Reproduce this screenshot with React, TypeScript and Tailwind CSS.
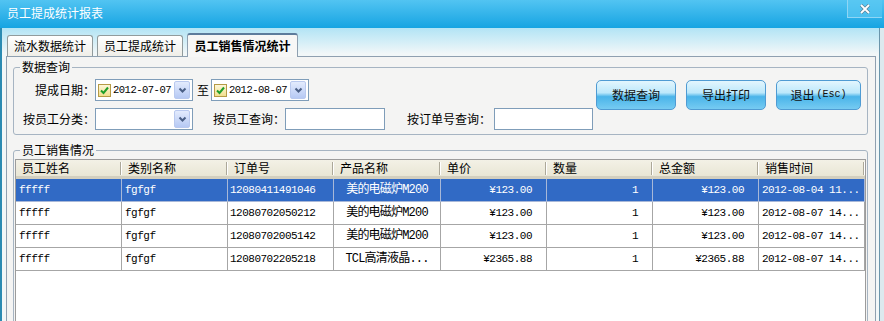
import React from "react";

const SANS = "font-['Noto_Sans_CJK_SC',sans-serif]";
const MONO = "font-['Liberation_Mono','Noto_Sans_CJK_SC',monospace]";
const GRID = "grid grid-cols-[106px_106px_106px_107px_106px_106px_106px_106px]";

type Row = {
  name: string;
  cat: string;
  no: string;
  product: string;
  price: string;
  qty: string;
  total: string;
  time: string;
};

const ROWS: Row[] = [
  { name: "fffff", cat: "fgfgf", no: "12080411491046", product: "美的电磁炉M200", price: "¥123.00", qty: "1", total: "¥123.00", time: "2012-08-04 11..." },
  { name: "fffff", cat: "fgfgf", no: "12080702050212", product: "美的电磁炉M200", price: "¥123.00", qty: "1", total: "¥123.00", time: "2012-08-07 14..." },
  { name: "fffff", cat: "fgfgf", no: "12080702005142", product: "美的电磁炉M200", price: "¥123.00", qty: "1", total: "¥123.00", time: "2012-08-07 14..." },
  { name: "fffff", cat: "fgfgf", no: "12080702205218", product: "TCL高清液晶...", price: "¥2365.88", qty: "1", total: "¥2365.88", time: "2012-08-07 14..." },
];

const HEADERS = ["员工姓名", "类别名称", "订单号", "产品名称", "单价", "数量", "总金额", "销售时间"];

function Chevron() {
  return (
    <svg width="9" height="7" viewBox="0 0 9 7">
      <path d="M1.5 1.5 L4.5 4.5 L7.5 1.5" fill="none" stroke="#4a5f86" strokeWidth="2" />
    </svg>
  );
}

function DropButton() {
  return (
    <div className="ml-auto flex h-[18px] w-[16px] shrink-0 items-center justify-center rounded-[2px] border border-[#b9c9ef] bg-[linear-gradient(to_bottom,#e3ebfd,#b6c9f4)]">
      <Chevron />
    </div>
  );
}

function DatePicker({ value }: { value: string }) {
  return (
    <div className="flex h-[22px] w-[98px] shrink-0 items-center border border-[#7f9db9] bg-white pl-[2px] pr-[2px]">
      <div className="flex h-[13px] w-[13px] shrink-0 items-center justify-center border border-[#b59a45] bg-[linear-gradient(to_bottom,#fdf6d8,#f1df8e)]">
        <svg width="11" height="11" viewBox="0 0 11 11">
          <path d="M2 5.5 L4.5 8 L9 2.5" fill="none" stroke="#1f9f2a" strokeWidth="2" />
        </svg>
      </div>
      <span className={`${MONO} ml-[2px] whitespace-nowrap text-[10.5px] leading-[14px] tracking-[-0.5px] text-black`}>{value}</span>
      <DropButton />
    </div>
  );
}

function TextBox({ w }: { w: string }) {
  return <div className={`h-[22px] ${w} shrink-0 border border-[#7f9db9] bg-white`} />;
}

function GlossButton({ children, w }: { children: React.ReactNode; w: string }) {
  return (
    <button
      className={`flex h-[30px] ${w} items-center justify-center rounded-[5px] border border-[#4f9bd3] bg-[linear-gradient(to_bottom,#e3f6fe_0%,#bce8fb_42%,#4ab4e9_56%,#76cbf2_100%)] text-[12px] leading-none text-[#111]`}
    >
      {children}
    </button>
  );
}

function Tab({ label, active }: { label: string; active?: boolean }) {
  if (active) {
    return (
      <div className="relative z-10 -mb-px flex h-[24px] w-[111px] items-center justify-center rounded-t-[3px] border border-b-0 border-[#8fa0b0] border-t-2 border-t-[#5d7c9c] bg-[#f7f7f6] text-[12px] font-bold leading-none text-black">
        {label}
      </div>
    );
  }
  return (
    <div className="flex h-[21px] w-[86px] items-center justify-center rounded-t-[3px] border border-b-0 border-[#919b9c] bg-[linear-gradient(to_bottom,#ffffff,#efeee8)] text-[12px] leading-none text-black">
      {label}
    </div>
  );
}

export default function App() {
  return (
    <div className={`${SANS} flex h-[321px] w-[884px] flex-col overflow-hidden bg-white`}>
      {/* Title bar */}
      <div className="flex h-[28px] shrink-0 items-start justify-between bg-[linear-gradient(to_bottom,#52c4f2,#16a4e2)]">
        <span className="pl-[7px] pt-[6px] text-[12px] leading-[14px] text-white">员工提成统计报表</span>
        <div className="mr-[2px] flex h-[18px] w-[35px] items-center justify-center border-b border-l border-[#8fd6f5] bg-[#5ec9f3]/60">
          <svg width="12" height="10" viewBox="0 0 12 10">
            <path d="M2 1 L10 9 M10 1 L2 9" stroke="#5b7d92" strokeWidth="3.2" />
            <path d="M2 1 L10 9 M10 1 L2 9" stroke="#ffffff" strokeWidth="1.8" />
          </svg>
        </div>
      </div>

      {/* Body */}
      <div className="flex flex-1 flex-col border-l-2 border-r-4 border-l-[#2b8bb2] border-r-[#dce9ee] bg-[linear-gradient(to_bottom,#b2e4f5_0px,#f2f7f8_26px)] pl-[4px] pr-[4px] shadow-[inset_-1px_0_0_#6a95ab]">
        {/* Tabs */}
        <div className="flex h-[28px] shrink-0 items-end gap-[4px] pl-[1px]">
          <Tab label="流水数据统计" />
          <Tab label="员工提成统计" />
          <Tab label="员工销售情况统计" active />
        </div>

        {/* Tab page */}
        <div className="flex flex-1 flex-col border border-[#8fa0b0] bg-[#f4f4f3]">
          {/* 数据查询 */}
          <fieldset className="ml-[6px] mr-[7px] mt-[2px] rounded-[3px] border border-[#a6b4c2] pb-[4px]">
            <legend className="ml-[6px] px-[2px] text-[12px] leading-[16px] text-black">数据查询</legend>
            <div className="flex pt-[4px]">
              <div className="flex flex-col gap-[7px]">
                <div className="flex items-center">
                  <span className="w-[81px] shrink-0 text-right text-[12px] leading-none text-black">提成日期：</span>
                  <DatePicker value="2012-07-07" />
                  <span className="ml-[4px] mr-[2px] text-[12px] leading-none text-black">至</span>
                  <DatePicker value="2012-08-07" />
                </div>
                <div className="flex items-center">
                  <span className="w-[81px] shrink-0 text-right text-[12px] leading-none text-black">按员工分类：</span>
                  <div className="flex h-[22px] w-[98px] shrink-0 items-center border border-[#7f9db9] bg-white pr-[2px]">
                    <DropButton />
                  </div>
                  <span className="ml-[20px] w-[72px] shrink-0 text-[12px] leading-none text-black">按员工查询：</span>
                  <TextBox w="w-[100px]" />
                  <span className="ml-[22px] mr-[3px] w-[84px] shrink-0 text-[12px] leading-none text-black">按订单号查询：</span>
                  <TextBox w="w-[99px]" />
                </div>
              </div>
              <div className="ml-[3px] mt-[1px] flex items-start gap-[10px]">
                <GlossButton w="w-[80px]">数据查询</GlossButton>
                <GlossButton w="w-[80px]">导出打印</GlossButton>
                <GlossButton w="w-[85px]">
                  退出<span className={`${MONO} ml-[2px] text-[10px]`}>(Esc)</span>
                </GlossButton>
              </div>
            </div>
          </fieldset>

          {/* 员工销售情况 */}
          <fieldset className="ml-[6px] mr-[7px] mt-[7px] h-[200px] shrink-0 rounded-[3px] border border-[#a6b4c2]">
            <legend className="ml-[6px] px-[2px] text-[12px] leading-[16px] text-black">员工销售情况</legend>
            <div className="ml-[1px] mr-[1px] mt-[1px] h-[180px] w-[851px] border border-[#9c9c9c] bg-white">
              <div className={`${GRID} h-[19px] border-b-[3px] border-b-[#d3cfbf] bg-[linear-gradient(to_bottom,#f3f1e6,#e9e6d5)]`}>
                {HEADERS.map((h) => (
                  <div key={h} className="flex items-center justify-between pl-[6px]">
                    <span className="text-[12px] leading-none text-black">{h}</span>
                    <div className="h-[13px] w-[2px] border-l border-r border-l-[#aca899] border-r-white" />
                  </div>
                ))}
              </div>
              {ROWS.map((r, i) => {
                const sel = i === 0;
                const cell = `flex h-[23px] items-center border-b border-r whitespace-nowrap ${
                  sel ? "border-[#a8b8d8] bg-[#316ac5] text-white" : "border-[#a6a6a6] text-black"
                } ${MONO} text-[11px] leading-none tracking-[-0.5px]`;
                return (
                  <div key={i} className={GRID}>
                    <div className={`${cell} pl-[3px]`}>{r.name}</div>
                    <div className={`${cell} pl-[3px]`}>{r.cat}</div>
                    <div className={`${cell} pl-[2px]`}>{r.no}</div>
                    <div className={`${cell} justify-center text-[12px] tracking-[-0.8px]`}>{r.product}</div>
                    <div className={`${cell} justify-end pr-[14px]`}>{r.price}</div>
                    <div className={`${cell} justify-end pr-[14px]`}>{r.qty}</div>
                    <div className={`${cell} justify-end pr-[14px]`}>{r.total}</div>
                    <div className={`${cell} pl-[3px]`}>{r.time}</div>
                  </div>
                );
              })}
            </div>
          </fieldset>
        </div>
      </div>
    </div>
  );
}
